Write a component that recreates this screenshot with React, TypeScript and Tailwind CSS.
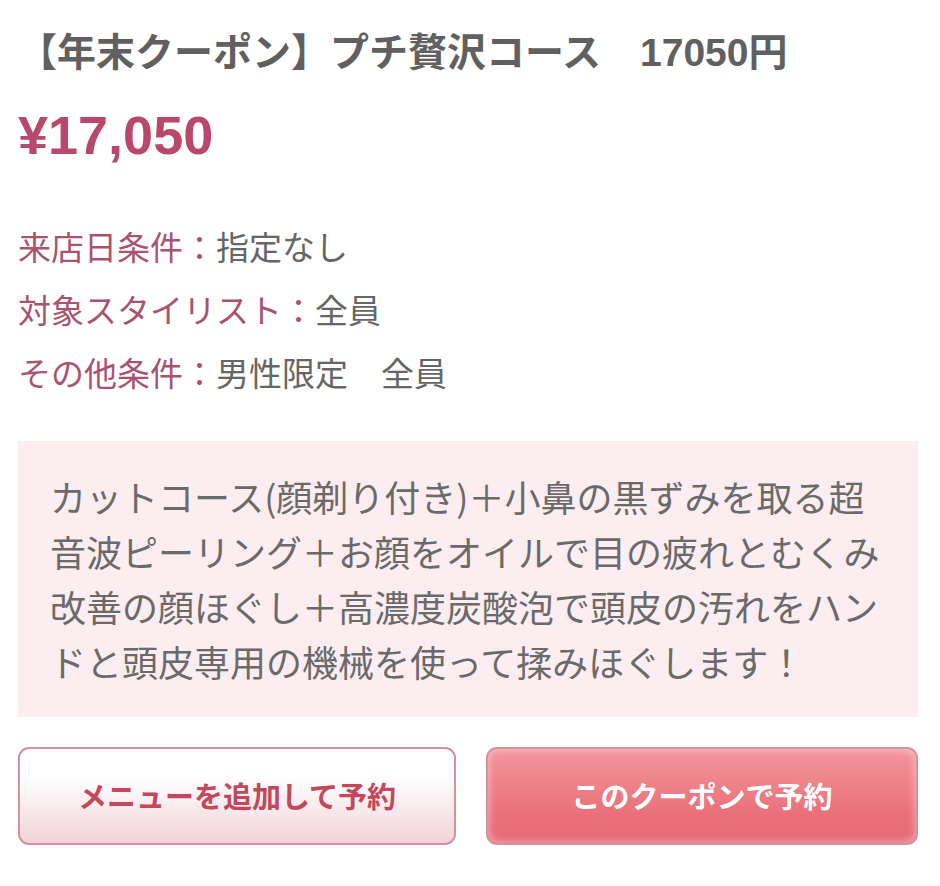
import React from "react";

const jp = '"Noto Sans CJK JP", "Noto Sans", sans-serif';
const mixed = '"Liberation Sans", "Noto Sans CJK JP", sans-serif';

export default function App() {
  return (
    <div className="w-[940px] h-[886px] bg-white pl-[18px] pr-[22px] pt-[24px]" style={{ fontFamily: jp }}>
      <h1
        className="text-[39px] leading-[57px] font-bold text-[#606060] whitespace-nowrap"
        style={{ fontFamily: mixed }}
      >
        【年末クーポン】プチ贅沢コース　17050円
      </h1>
      <div
        className="mt-[23px] text-[54px] leading-[62px] font-bold text-[#b9486b]"
        style={{ fontFamily: mixed }}
      >
        ¥17,050
      </div>
      <div className="mt-[49px] flex flex-col text-[33px] leading-[63px]">
        <div>
          <span className="text-[#a9536f]">来店日条件：</span>
          <span className="text-[#666666]">指定なし</span>
        </div>
        <div>
          <span className="text-[#a9536f]">対象スタイリスト：</span>
          <span className="text-[#666666]">全員</span>
        </div>
        <div>
          <span className="text-[#a9536f]">その他条件：</span>
          <span className="text-[#666666]">男性限定　全員</span>
        </div>
      </div>
      <div className="mt-[37px] bg-[#fcedf0] px-[32px] py-[28px] text-[36px] leading-[55px] text-[#6a6a6a] whitespace-nowrap">
        カットコース(顔剃り付き)＋小鼻の黒ずみを取る超
        <br />
        音波ピーリング＋お顔をオイルで目の疲れとむくみ
        <br />
        改善の顔ほぐし＋高濃度炭酸泡で頭皮の汚れをハン
        <br />
        ドと頭皮専用の機械を使って揉みほぐします！
      </div>
      <div className="mt-[30px] flex justify-between">
        <button className="w-[438px] h-[98px] rounded-[11px] border-2 border-[#d4939c] bg-gradient-to-b from-white from-30% to-[#f1d3d9] text-[29px] font-bold text-[#c4475b] flex items-center justify-center">
          メニューを追加して予約
        </button>
        <button className="w-[432px] h-[98px] rounded-[11px] border-2 border-[#d6929f] bg-gradient-to-b from-[#f2959c] via-[#e9707a] via-70% to-[#e66a75] shadow-[inset_0_0_8px_rgba(255,255,255,0.55)] text-[29px] font-bold text-white flex items-center justify-center">
          このクーポンで予約
        </button>
      </div>
    </div>
  );
}
